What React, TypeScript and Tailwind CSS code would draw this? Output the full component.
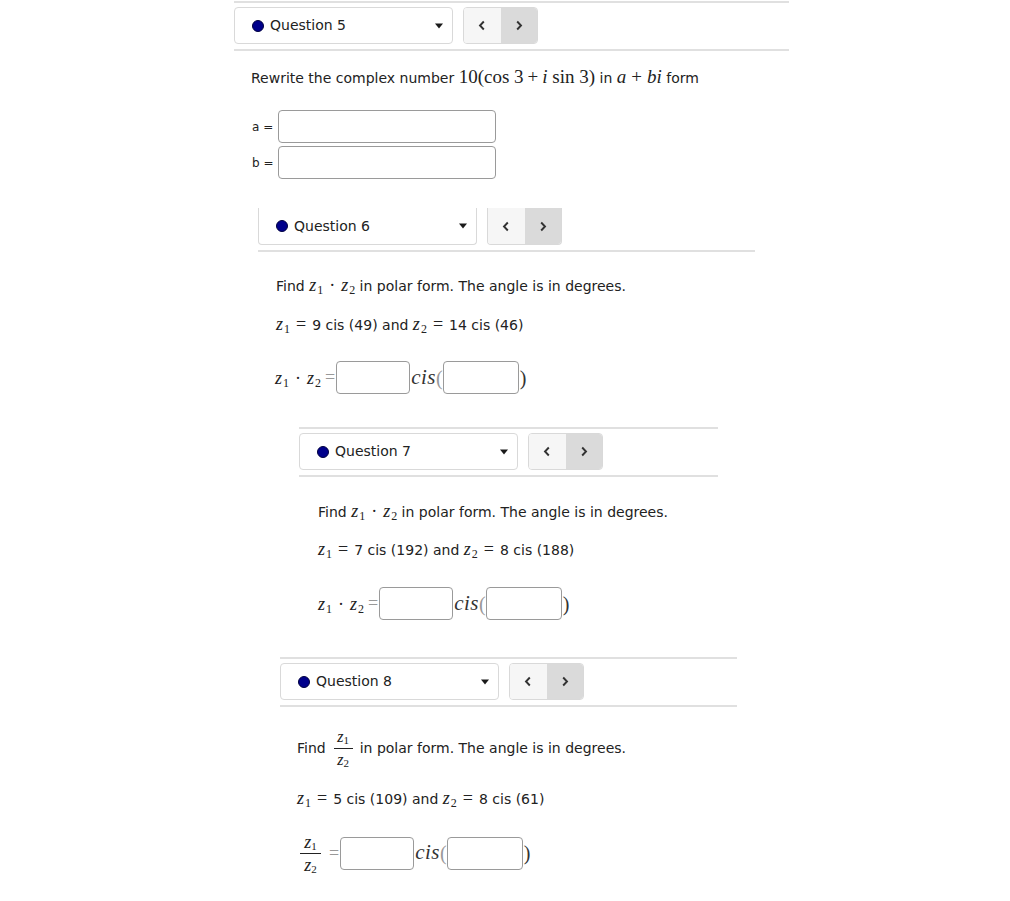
import React from "react";

const SERIF = "font-['Liberation_Serif',serif]";

function ChevronLeft() {
  return (
    <svg width="8" height="11" viewBox="0 0 8 11">
      <path d="M5.8 1.5 L2 5.5 L5.8 9.5" fill="none" stroke="#333" strokeWidth="1.9" />
    </svg>
  );
}
function ChevronRight() {
  return (
    <svg width="8" height="11" viewBox="0 0 8 11">
      <path d="M2.2 1.5 L6 5.5 L2.2 9.5" fill="none" stroke="#333" strokeWidth="1.9" />
    </svg>
  );
}

function Header({ label, noTop }: { label: string; noTop?: boolean }) {
  return (
    <div className="flex">
      <div
        className={`flex items-center h-[37px] w-[219px] border border-[#d9d9d9] bg-white pl-[17px] pr-[9px] ${
          noTop ? "border-t-0 rounded-b-[4px]" : "rounded-[4px]"
        }`}
      >
        <span className="w-[12px] h-[12px] rounded-full bg-[#00008b] border border-[#000040]" />
        <span className="ml-[6px] text-[14px] text-[#222]">{label}</span>
        <svg className="ml-auto" width="8" height="6" viewBox="0 0 8 6">
          <path d="M0 0.5H8L4 5.5Z" fill="#1a1a1a" />
        </svg>
      </div>
      <div
        className={`ml-[10px] flex h-[37px] w-[75px] border border-[#d9d9d9] overflow-hidden ${
          noTop ? "border-t-0 rounded-b-[4px]" : "rounded-[4px]"
        }`}
      >
        <div className="flex-1 flex items-center justify-center bg-[#f6f6f6]">
          <ChevronLeft />
        </div>
        <div className="flex-1 flex items-center justify-center bg-[#dadada]">
          <ChevronRight />
        </div>
      </div>
    </div>
  );
}

function Line() {
  return <div className="h-[2px] bg-[#e0e0e0]" />;
}

function Z({ n }: { n: string }) {
  return (
    <span className={`${SERIF} text-[18px] italic leading-[18px]`}>
      z<sub className="not-italic text-[12px] ml-[1px]">{n}</sub>
    </span>
  );
}

function Eq() {
  return <span className={`${SERIF} text-[18px] leading-[18px] mx-[6px]`}>=</span>;
}

function Dot() {
  return <span className={`${SERIF} text-[18px] leading-[18px] mx-[6px]`}>·</span>;
}

function Box({ w = "w-[75px]" }: { w?: string }) {
  return <div className={`${w} h-[33px] rounded-[4px] border border-[#9a9a9a] bg-white`} />;
}

function CisTail() {
  return (
    <>
      <Box w="w-[74px]" />
      <span className={`${SERIF} text-[21px] italic text-[#333] ml-[1px] tracking-[0.5px]`}>cis</span>
      <span className={`${SERIF} text-[20px] text-[#999]`}>(</span>
      <Box w="w-[76px]" />
      <span className={`${SERIF} text-[20px] text-[#333] ml-[1px]`}>)</span>
    </>
  );
}

function ProductRow() {
  return (
    <div className="flex items-center h-[33px]">
      <Z n="1" />
      <Dot />
      <Z n="2" />
      <span className={`${SERIF} text-[18px] text-[#999] ml-[4px] mr-[1px]`}>=</span>
      <CisTail />
    </div>
  );
}

function FindProduct() {
  return (
    <p className="leading-[20px] text-[14px] text-[#222]">
      Find <Z n="1" />
      <Dot />
      <Z n="2" /> in polar form. The angle is in degrees.
    </p>
  );
}

function Given({ a, b }: { a: string; b: string }) {
  return (
    <p className="leading-[20px] text-[14px] text-[#222]">
      <Z n="1" />
      <Eq />
      {a} and <Z n="2" />
      <Eq />
      {b}
    </p>
  );
}

function Frac({ small }: { small?: boolean }) {
  const sz = small ? "text-[16px]" : "text-[18px]";
  return (
    <span className="inline-flex flex-col items-center align-middle leading-none">
      <span className={`${SERIF} ${sz} italic leading-[18px]`}>
        z<sub className="not-italic text-[11px]">1</sub>
      </span>
      <span className={`block h-[1px] bg-[#222] ${small ? "w-[19px]" : "w-[21px]"} my-[2px]`} />
      <span className={`${SERIF} ${sz} italic leading-[18px]`}>
        z<sub className="not-italic text-[11px]">2</sub>
      </span>
    </span>
  );
}

export default function App() {
  return (
    <div className="w-[1010px] min-h-[901px] bg-white text-[#222] text-[14px] font-['DejaVu_Sans',sans-serif] flex flex-col">
      {/* Question 5 */}
      <div className="ml-[234px] w-[555px] mt-[1px]">
        <Line />
        <div className="mt-[4px]">
          <Header label="Question 5" />
        </div>
        <div className="mt-[5px]">
          <Line />
        </div>
        <div className="pl-[17px]">
          <p className="mt-[16px] leading-[20px] text-[14px]">
            Rewrite the complex number{" "}
            <span className={`${SERIF} text-[19px]`}>
              10(cos 3<span className="mx-[4px]">+</span>
              <i>i</i> sin 3)
            </span>{" "}
            in{" "}
            <span className={`${SERIF} text-[19px]`}>
              <i>a</i>
              <span className="mx-[5px]">+</span>
              <i>bi</i>
            </span>{" "}
            form
          </p>
          <div className="mt-[22px] flex items-center">
            <span className="w-[27px] pl-[1px] text-[12px]">a =</span>
            <Box w="w-[218px]" />
          </div>
          <div className="mt-[3px] flex items-center">
            <span className="w-[27px] pl-[1px] text-[12px]">b =</span>
            <Box w="w-[218px]" />
          </div>
        </div>
      </div>

      {/* Question 6 */}
      <div className="ml-[258px] w-[497px] mt-[29px]">
        <Header label="Question 6" noTop />
        <div className="mt-[5px]">
          <Line />
        </div>
        <div className="pl-[18px]">
          <div className="mt-[24px]">
            <FindProduct />
          </div>
          <div className="mt-[19px]">
            <Given a="9 cis (49)" b="14 cis (46)" />
          </div>
          <div className="mt-[26px] -ml-[1px]">
            <ProductRow />
          </div>
        </div>
      </div>

      {/* Question 7 */}
      <div className="ml-[299px] w-[419px] mt-[33px]">
        <Line />
        <div className="mt-[4px]">
          <Header label="Question 7" />
        </div>
        <div className="mt-[5px]">
          <Line />
        </div>
        <div className="pl-[19px]">
          <div className="mt-[25px]">
            <FindProduct />
          </div>
          <div className="mt-[18px]">
            <Given a="7 cis (192)" b="8 cis (188)" />
          </div>
          <div className="mt-[27px]">
            <ProductRow />
          </div>
        </div>
      </div>

      {/* Question 8 */}
      <div className="ml-[280px] w-[457px] mt-[37px]">
        <Line />
        <div className="mt-[4px]">
          <Header label="Question 8" />
        </div>
        <div className="mt-[5px]">
          <Line />
        </div>
        <div className="pl-[17px]">
          <div className="mt-[20px] h-[42px] flex items-center text-[14px]">
            <span>Find</span>
            <span className="ml-[8px] mr-[7px]">
              <Frac small />
            </span>
            <span>in polar form. The angle is in degrees.</span>
          </div>
          <div className="mt-[20px]">
            <Given a="5 cis (109)" b="8 cis (61)" />
          </div>
          <div className="mt-[18px] h-[52px] flex items-center">
            <span className="ml-[3px]">
              <Frac />
            </span>
            <span className={`${SERIF} text-[18px] text-[#999] ml-[8px] mr-[1px]`}>=</span>
            <CisTail />
          </div>
        </div>
      </div>
    </div>
  );
}
